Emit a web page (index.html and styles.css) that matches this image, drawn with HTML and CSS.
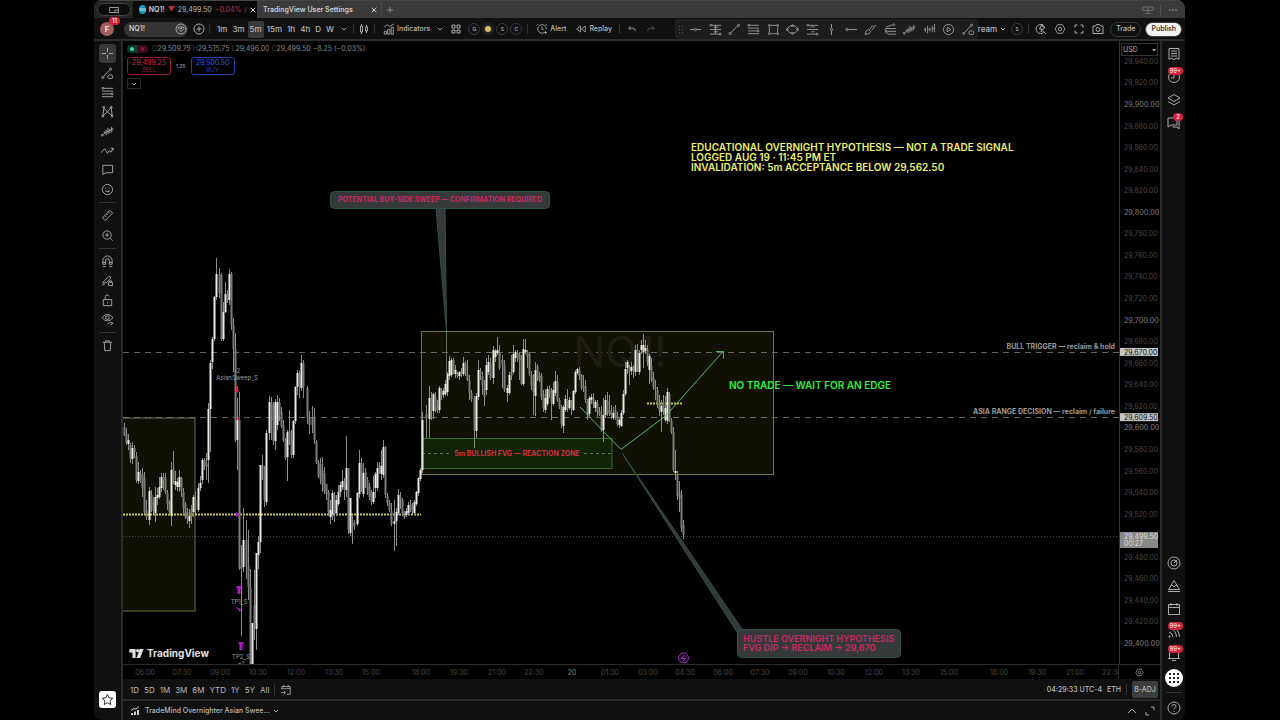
FILE: index.html
```
<!DOCTYPE html>
<html lang="en">

<head>
    <meta charset="UTF-8">
    <meta name="viewport" content="width=device-width, initial-scale=1.0">
    <title>NQ1! 29,499.50</title>
    <link rel="stylesheet" href="styles.css">
</head>

<body>
    <!-- shared icons -->
    <svg class="sprite" aria-hidden="true">
        <symbol id="down" viewBox="0 0 6 6"><path d="M1 2l2 2 2-2" /></symbol>
        <symbol id="close" viewBox="0 0 6 6"><path d="M.7.7l4.6 4.6M5.3.7L.7 5.3" /></symbol>
        <symbol id="trend" viewBox="0 0 14 14"><path d="M3 10.5L10.500 3" /><circle cx="2.200" cy="11.300" r="1.200" /><circle cx="11.300" cy="2.500" r="1.200" /></symbol>
        <symbol id="trendlock" viewBox="0 0 14 14"><path d="M2.500 10.500L9.500 3" /><circle cx="1.800" cy="11.300" r="1.100" /><circle cx="10.300" cy="2.300" r="1.100" /><rect x="7.500" y="8.500" width="5" height="4" rx="1.500" /></symbol>
        <symbol id="fib" viewBox="0 0 14 14"><path d="M3 2.500h10M1 5.500h12M1 8.500h10M1 11.500h12" /><circle cx="2" cy="2.500" r="1" /><circle cx="12" cy="8.500" r="1" /></symbol>
        <symbol id="position" viewBox="0 0 14 14"><path d="M3 2.500h10M1 7h12M1 12h10M7 2.500v9M5 4.500h5M5 9.500h5" /><circle cx="2" cy="2.500" r="1" /><circle cx="12" cy="12" r="1" /></symbol>
        <symbol id="bars" viewBox="0 0 14 14"><path d="M2 10.500l1.500-1.500V7M5.500 5v6M7.500 3v7M9.500 4v5M11.500 2v6M3.500 9l2-1 2-1 2-1 2-1 2-1" /><circle cx="1.300" cy="11" r="1" /></symbol>
        <symbol id="gear" viewBox="0 0 14 14"><path d="M4.200 2h5.600l3 5-3 5H4.200l-3-5z" /><circle cx="7" cy="7" r="2" /></symbol>
        <symbol id="chart" viewBox="0 0 14 14"><path d="M1 5l4-3 3 2 5-3M1.500 13V9.500H4V13zM5.500 13V7.500H8V13zM9.500 13V5H12v8z" /></symbol>
    </svg>

    <div class="app">
        <header class="tabs">
            <div class="tabs-start"><button class="pill" aria-label="Window"><svg viewBox="0 0 14 10"><rect x="2" y="2" width="10" height="6" /><path d="M8 8V5h4" /></svg></button></div>
            <div class="tab active">
                <span class="coin">100</span>
                <b>NQ1!</b>
                <span class="red">▼</span>
                <span>29,499.50</span>
                <span class="red">−0.04%</span>
                <span class="dim">/</span>
                <button class="x" aria-label="Close"><svg><use href="#close" /></svg></button>
            </div>
            <div class="tab">
                <b>TradingView User Settings</b>
                <button class="x" aria-label="Close"><svg><use href="#close" /></svg></button>
            </div>
            <button class="new-tab" aria-label="New tab"><svg viewBox="0 0 8 8"><path d="M4 1v6M1 4h6" /></svg></button>
            <div class="tabs-end">
                <button aria-label="Layout"><svg viewBox="0 0 14 10"><path d="M1 1.500h12v4H1zM7 1.500V9M4 9h6" /></svg></button>
                <button aria-label="More"><svg viewBox="0 0 14 10"><circle cx="3.500" cy="5" r="1" /><circle cx="7" cy="5" r="1" /><circle cx="10.500" cy="5" r="1" /></svg></button>
            </div>
        </header>

        <nav class="toolbar">
            <button class="avatar">F<i>11</i></button>
            <button class="symbol">NQ1!<svg viewBox="0 0 12 12"><circle cx="6" cy="6" r="5" /><path d="M3.500 4h5L9 5.500l-3 3-3-3zM5 5.500h2" /></svg></button>
            <button class="icon" aria-label="Compare"><svg viewBox="0 0 12 12"><circle cx="6" cy="6" r="5" /><path d="M6 3.500v5M3.500 6h5" /></svg></button>
            <hr>
            <div class="frames">
                <button>1m</button><button>3m</button><button class="on">5m</button><button>15m</button><button>1h</button><button>4h</button><button>D</button><button>W</button>
                <button class="more" aria-label="More intervals"><svg><use href="#down" /></svg></button>
            </div>
            <hr>
            <button class="icon" aria-label="Candles"><svg viewBox="0 0 12 12"><path d="M2.500 3h2v6h-2zM3.500 1v2M3.500 9v2M7.500 4h2v4h-2zM8.500 2v2M8.500 8v2" /></svg></button>
            <hr>
            <button class="text"><svg><use href="#chart" /></svg>Indicators</button>
            <button class="more fav" aria-label="Favourite indicators"><svg><use href="#down" /></svg></button>
            <button class="icon grid" aria-label="Templates"><svg viewBox="0 0 12 12"><path d="M2 2h3v3H2zM7 2h3v3H7zM2 7h3v3H2zM7 7h3v3H7z" /></svg></button>
            <div class="circles">
                <button>G</button><button class="gold" aria-label="Gold template"></button><button>S</button><button>C</button>
            </div>
            <hr>
            <button class="text"><svg viewBox="0 0 14 14"><path d="M9 11.500A5 5 0 1 1 12 7M7 4v3.500h2M1 3l2-2M11 1l2 2M11 9v4M9 11h4" /></svg>Alert</button>
            <button class="text replay"><svg viewBox="0 0 14 14"><path d="M6.500 3.500v7L2 7zM12 3.500v7L7.500 7z" /></svg>Replay</button>
            <hr>
            <button class="icon undo" aria-label="Undo"><svg viewBox="0 0 12 12"><path d="M4.500 2.500L2 5l2.500 2.500M2 5h5q3 0 3 3.500" /></svg></button>
            <button class="icon undo dim" aria-label="Redo"><svg viewBox="0 0 12 12"><path d="M7.500 2.500L10 5 7.500 7.500M10 5H5q-3 0-3 3.500" /></svg></button>

            <div class="favorites">
                <span class="grip"></span>
                <button aria-label="Horizontal line"><svg viewBox="0 0 14 14"><path d="M1 7h4.500M8.500 7H13" /><circle cx="7" cy="7" r="1.200" /></svg></button>
                <button aria-label="Long position"><svg><use href="#position" /></svg></button>
                <button aria-label="Trend line"><svg><use href="#trend" /></svg></button>
                <button aria-label="Fib retracement"><svg><use href="#fib" /></svg></button>
                <button aria-label="Rectangle"><svg viewBox="0 0 14 14"><path d="M3.500 2.500h7M3.500 11.500h7M2.500 3.500v7M11.500 3.500v7" /><circle cx="2.500" cy="2.500" r="1" /><circle cx="11.500" cy="2.500" r="1" /><circle cx="2.500" cy="11.500" r="1" /><circle cx="11.500" cy="11.500" r="1" /></svg></button>
                <button aria-label="Ellipse"><svg viewBox="0 0 14 14"><ellipse cx="7" cy="7" rx="5.500" ry="4" /><circle cx="1.300" cy="7" r="1" /><circle cx="12.700" cy="7" r="1" /><circle cx="7" cy="2.800" r="1" /><circle cx="7" cy="11.200" r="1" /></svg></button>
                <button aria-label="Short position"><svg viewBox="0 0 14 14"><path d="M3 2.500h10M1 7h12M1 12h10M5 5l2-2 2 2M6 9.500h3" /><circle cx="2" cy="2.500" r="1" /><circle cx="12" cy="12" r="1" /></svg></button>
                <button aria-label="Vertical line"><svg viewBox="0 0 14 14"><path d="M7 1v4.500M7 8.500V13" /><circle cx="7" cy="7" r="1.200" /></svg></button>
                <button aria-label="Horizontal ray"><svg viewBox="0 0 14 14"><path d="M3 7h10" /><circle cx="2" cy="7" r="1.200" /></svg></button>
                <button aria-label="Brush"><svg viewBox="0 0 14 14"><path d="M1 12q1-5 4-5l2 2q0 3-6 3zM6 7l3-4 2 2-3 3M11 4l2-2" /></svg></button>
                <button aria-label="Fib channel"><svg viewBox="0 0 14 14"><path d="M2 4.500L9 2M13 6H3q-2 0-2 1t2 1M13 9H4q-2 0-2 1M13 12H5q-2 0-4-4" /><circle cx="10.500" cy="1.800" r="1" /></svg></button>
                <button aria-label="Anchored VWAP"><svg><use href="#bars" /></svg></button>
                <button aria-label="Bars pattern"><svg viewBox="0 0 14 14"><path d="M2.500 5v5M5 3v8M7.500 5v4M10 3v7M12.500 1v9M1 7h2M6 7h2M10 6h2" /></svg></button>
                <button aria-label="Replay"><svg viewBox="0 0 14 14"><circle cx="7" cy="7" r="5.500" /><path d="M5.500 4.500v5L9.500 7z" /></svg></button>
                <button aria-label="Line lock"><svg><use href="#trendlock" /></svg></button>
            </div>

            <button class="layout-name">ream</button>
            <button class="more" aria-label="Layouts"><svg><use href="#down" /></svg></button>
            <div class="circles"><button>S</button></div>
            <hr>
            <div class="tool-icons">
                <button class="icon" aria-label="Quick search"><svg viewBox="0 0 12 12"><path d="M8.500 9.500A4.500 4.500 0 1 1 9 3M8 8l3 3M7 1L4.500 6H7L6 9l4-5H7.500z" /></svg></button>
                <button class="icon" aria-label="Settings"><svg><use href="#gear" /></svg></button>
                <button class="icon" aria-label="Fullscreen"><svg viewBox="0 0 12 12"><path d="M2 4.500V2h2.500M7.500 2H10v2.500M10 7.500V10H7.500M4.500 10H2V7.500" /></svg></button>
                <button class="icon" aria-label="Snapshot"><svg viewBox="0 0 12 12"><path d="M1 3h2.500L4.500 1.500h3l1 1.500H11v7.500H1z" /><circle cx="6" cy="6.500" r="2" /></svg></button>
            </div>
            <button class="trade">Trade</button>
            <button class="publish">Publish</button>
        </nav>

        <aside class="left">
            <div class="group g8">
                <button class="on" aria-label="Cross"><svg viewBox="0 0 14 14"><path d="M7 1v4.500M7 8.500V13M1 7h4.500M8.500 7H13" /></svg></button>
                <button aria-label="Lines"><svg><use href="#trendlock" /></svg></button>
                <button aria-label="Fib"><svg><use href="#fib" /></svg></button>
                <button aria-label="Patterns"><svg viewBox="0 0 14 14"><path d="M2 11.500l1-8 4 4 4-5 1 9-5-4z" /><circle cx="3" cy="2.500" r="1" /><circle cx="11" cy="2.500" r="1" /><circle cx="2" cy="12" r="1" /><circle cx="12" cy="12" r="1" /></svg></button>
                <button aria-label="Forecasting"><svg><use href="#bars" /></svg></button>
                <button aria-label="Brushes"><svg viewBox="0 0 14 14"><path d="M0 9.500l4-4.500 3 5 2-3 1.500 2L13 4.500M10.500 4.500H13V7" /></svg></button>
                <button aria-label="Text"><svg viewBox="0 0 14 14"><path d="M2 2.500h10.500v8H5l-3 2z" /></svg></button>
                <button aria-label="Emoji"><svg viewBox="0 0 14 14"><circle cx="7" cy="7" r="5.500" /><path d="M4.500 8.500q2.500 2 5 0M5 5v1M9 5v1" /></svg></button>
            </div>
            <hr>
            <div class="group g2">
                <button aria-label="Measure"><svg viewBox="0 0 14 14"><path d="M1.500 9.500l8-8 3 3-8 8zM4 7l1.500 1.500M6 5l1.500 1.500M8 3l1.500 1.500" /></svg></button>
                <button aria-label="Zoom in"><svg viewBox="0 0 14 14"><circle cx="6.500" cy="6.500" r="4.500" /><path d="M10 10l2.500 2.500M6.500 4.500v4M4.500 6.500h4" /></svg></button>
            </div>
            <hr>
            <div class="group g4">
                <button aria-label="Magnet"><svg viewBox="0 0 14 14"><path d="M2 10V6a5 5 0 0 1 10 0v4H9V6a2 2 0 0 0-4 0v4zM2 12.500h3M9 12.500h3M2 8h3M9 8h3" /></svg></button>
                <button aria-label="Stay in drawing mode"><svg viewBox="0 0 14 14"><path d="M1.500 9.500l7-7q2 0 2 2l-5 5q-2 0-4 0zM1 12l3-1M8 9h4.500v3.500H8zM9 9V7.500h2.500V9" /></svg></button>
                <button aria-label="Lock"><svg viewBox="0 0 14 14"><path d="M2.500 6h9v6.500h-9zM4.500 6V3q0-2 2-2t2 1.500M7 8.500v1.500" /></svg></button>
                <button aria-label="Hide"><svg viewBox="0 0 14 14"><path d="M1 5q6-7 12 0-6 7-12 0zM7 12l3-2 3 1-3 2" /><circle cx="7" cy="5" r="2" /></svg></button>
            </div>
            <hr>
            <div class="group g1">
                <button aria-label="Remove"><svg viewBox="0 0 14 14"><path d="M2 3.500h10M5 3.500V2h4v1.500M3.500 3.500l.5 9h6l.5-9" /></svg></button>
            </div>
            <button class="star" aria-label="Favourites"><svg viewBox="0 0 14 14"><path d="M7 1.500l1.700 3.700 4 .5-3 2.700.8 4L7 10.400l-3.500 2 .8-4-3-2.700 4-.5z" /></svg></button>
        </aside>

        <main class="center">
            <section class="plot">
                <svg class="canvas" id="canvas">
                    <!-- everything below uses window coordinates -->
                    <g transform="translate(-123 -41)">
                        <g class="hlines">
                            <path class="dash" d="M123 352.500H1119M123 417.500H1119" />
                            <path class="last" d="M123 536.500H1119" />
                        </g>
                        <text class="watermark" x="620" y="367">NQ1!</text>
                        <rect class="range" x="100" y="418" width="95" height="193" />
                        <rect class="range" x="421.500" y="331.500" width="352" height="143" />
                        <rect class="gap" x="422" y="438.500" width="190" height="30" />
                        <path class="gap-mid" d="M422 453.500H449M584 453.500H612" />
                        <path class="dots" d="M123 514.500H421M647 403.500H683" />
                        <g id="candles"></g>
                        <g class="marks">
                            <text x="237" y="373">-2</text>
                            <text x="237" y="380">AsianSweep_S</text>
                            <text x="239" y="604">TP1_S</text>
                            <text x="241" y="659">TP2_S</text>
                            <text x="241" y="666">+1</text>
                            <path class="sell" d="M236 386h2v4h2l-3 3-3-3h2zM240 416v5l-3-2.500z" />
                            <path class="take" d="M236 586h6l-1.500 3v5h-3v-5zM238 642h6l-1.500 3v5h-3v-5zM236 512l4 2.500-4 2.500zM236 607l4 5 1-3z" />
                        </g>
                        <path class="callout" d="M436 208L446.500 331 445 208z" />
                        <path class="callout-line" d="M446.500 331v45" />
                        <path class="callout" d="M622 453L737 632 742 629z" />
                        <rect class="callout" x="330.500" y="191.500" width="219" height="17" rx="4" />
                        <rect class="callout" x="737.500" y="629.500" width="163" height="28" rx="4" />
                        <path class="plan" d="M580 407L621 449.500 666 415.500 723 351.500M716 351.500h7.500v7" />
                        <text class="pink small" x="440" y="202">POTENTIAL BUY-SIDE SWEEP — CONFIRMATION REQUIRED</text>
                        <text class="pink" x="743" y="642">HUSTLE OVERNIGHT HYPOTHESIS</text>
                        <text class="pink" x="743" y="651">FVG DIP → RECLAIM → 29,670</text>
                        <text class="zone" x="517" y="456">5m BULLISH FVG — REACTION ZONE</text>
                        <text class="note" x="691" y="151">EDUCATIONAL OVERNIGHT HYPOTHESIS — NOT A TRADE SIGNAL</text>
                        <text class="note" x="691" y="161">LOGGED AUG 19 · 11:45 PM ET</text>
                        <text class="note" x="691" y="171">INVALIDATION: 5m ACCEPTANCE BELOW 29,562.50</text>
                        <text class="wait" x="729" y="389">NO TRADE — WAIT FOR AN EDGE</text>
                        <text class="level" x="1115" y="349">BULL TRIGGER — reclaim &amp; hold</text>
                        <text class="level" x="1115" y="414">ASIA RANGE DECISION — reclaim / failure</text>
                        <g class="event"><circle cx="683.500" cy="658" r="5" /><path d="M684.500 655l-3 3.500h4l-3 3" /></g>
                    </g>
                </svg>
                <div class="legend">
                    <div class="ohlc">
                        <span class="status"><i></i><em>≈</em></span>
                        <span><u>O</u>29,509.75</span><span><u>H</u>29,515.75</span><span><u>L</u>29,496.00</span><span><u>C</u>29,499.50</span><span>−8.25 (−0.03%)</span>
                    </div>
                    <div class="quotes">
                        <button class="ask">29,499.25<small>SELL</small></button>
                        <span>1.25</span>
                        <button class="bid">29,500.50<small>BUY</small></button>
                    </div>
                    <button class="fold" aria-label="Collapse"><svg><use href="#down" /></svg></button>
                </div>
                <a class="brand" href="#"><svg viewBox="0 0 16 10"><path d="M0 0h7v10H3.500V4H0zM11.500 0H16l-4 10H8z" /><circle cx="9.300" cy="1.800" r="1.800" /></svg>TradingView</a>
            </section>

            <section class="prices">
                <label class="currency"><select aria-label="Currency">
                        <option>USD</option>
                    </select><svg viewBox="0 0 6 6"><path d="M1 2h4L3 4.500z" /></svg></label>
                <svg class="canvas" id="prices"></svg>
            </section>

            <svg class="times" id="times"></svg>
            <button class="axis-gear" aria-label="Axis settings"><svg><use href="#gear" /></svg></button>

            <div class="ranges">
                <button>1D</button><button>5D</button><button>1M</button><button>3M</button><button>6M</button><button>YTD</button><button>1Y</button><button>5Y</button><button>All</button>
                <hr>
                <button aria-label="Go to date"><svg viewBox="0 0 14 14"><path d="M2 6V3h10v9H8M4.500 1v3M9.500 1v3M2 5.500h10M1 10h5M4.500 8L6.500 10l-2 2" /></svg></button>
                <div class="ranges-end">
                    <button>04:29:33 UTC-4</button><button>ETH</button>
                    <hr><button class="on">B-ADJ</button>
                </div>
            </div>
            <footer class="footer">
                <svg class="solid" viewBox="0 0 10 10"><path d="M1 7h2v2H1zM4 5.500h2V9H4zM7 4h2v5H7z" /><path class="stroke" d="M1 4.500L4 2.500 6 3l3-2.500" /></svg>
                <span>TradeMind Overnighter Asian Swee...</span>
                <button class="more" aria-label="Strategy menu"><svg><use href="#down" /></svg></button>
                <div class="footer-end">
                    <button aria-label="Open panel"><svg viewBox="0 0 10 10"><path d="M1 7l4-4 4 4" /></svg></button>
                    <button aria-label="Maximise panel"><svg viewBox="0 0 10 10"><path d="M6 1h3v3M4 9H1V6" /></svg></button>
                </div>
            </footer>
        </main>

        <aside class="right">
            <button aria-label="Watchlist"><svg viewBox="0 0 14 14"><path d="M2 1.500h10v11l-2-1.500-3 1.500L4 11l-2 1.500zM4 4h6M4 6.500h6M4 9h6" /></svg></button>
            <button aria-label="Alerts"><svg viewBox="0 0 14 14"><circle cx="7" cy="7" r="5.500" /><path d="M7 4v4H4" /></svg><i>99+</i></button>
            <button aria-label="Object tree"><svg viewBox="0 0 14 14"><path d="M7 1.500l6 3.500-6 3.500L1 5zM1 8.500L7 12l6-3.500" /></svg></button>
            <button aria-label="Chats"><svg viewBox="0 0 14 14"><path d="M1 2h9v7H4l-3 2zM12 4.500v8.500l-2-2H5.500" /></svg><i class="one">2</i></button>
            <div class="spacer"></div>
            <button aria-label="Screener"><svg viewBox="0 0 14 14"><circle cx="7" cy="7" r="6" /><circle cx="7" cy="7" r="3" /><path d="M7 7l3-3" /></svg></button>
            <button aria-label="Pine"><svg viewBox="0 0 14 14"><path d="M7 1.500L3 8l2-2 2 2 2-2 2 2zM3 8l-1.500 2.500h11L11 8M1 12.500h12" /></svg></button>
            <button aria-label="Calendar"><svg viewBox="0 0 14 14"><path d="M1.500 2.500h11v10h-11zM1.500 5.500h11M4 1v3M10 1v3" /></svg></button>
            <button aria-label="News"><svg viewBox="0 0 14 14"><path d="M2 7q4 1 4 5M4 4q5 1 5.500 8M7 2q5 3 5.500 10" /><circle cx="2.500" cy="11.500" r=".7" /></svg><i>99+</i></button>
            <button aria-label="Notifications"><svg viewBox="0 0 14 14"><path d="M2.500 10.500V5q0-3 4.500-3t4.500 3v5.500h1.500H1zM5 12.500h4" /></svg><i>99+</i></button>
            <button class="apps" aria-label="Products"><svg viewBox="0 0 18 18"><circle cx="9" cy="9" r="9" /><path d="M4 5h10M4 9h10M4 13h10" /></svg></button>
            <hr>
            <button aria-label="Help"><svg viewBox="0 0 14 14"><circle cx="7" cy="7" r="6" /><path d="M5 5.500q0-2 2-2t2 1.700q0 1-2 2.300v1M7 10v1" /></svg></button>
        </aside>
    </div>
    <script src="chart.js"></script>
</body>

</html>
```
FILE: styles.css
```
* {
    box-sizing: border-box;
}

body {
    margin: 0;
    background: #000;
    color: #b8b8b8;
    font: 8px/10px Inter, "Liberation Sans", sans-serif;
}

button {
    display: flex;
    align-items: center;
    justify-content: center;
    margin: 0;
    padding: 0;
    border: 0;
    background: none;
    color: inherit;
    font: inherit;
    white-space: nowrap;
}

svg {
    display: block;
    flex: none;
    width: 12px;
    height: 12px;
    fill: none;
    stroke: #aaa;
    stroke-width: 1;
}

hr {
    flex: none;
    margin: 0;
    border: 0;
    background: #333;
}

.sprite {
    position: absolute;
    width: 0;
    height: 0;
}

.app {
    display: grid;
    grid-template-columns: 29px 1fr 25px;
    grid-template-rows: 18px 23px 1fr;
    height: 100vh;
    margin: 0 95px 0 94px;
    border-radius: 8px;
    background: #101010;
    overflow: hidden;
}

.red {
    color: #c22f45;
}

/* tabs */
.tabs {
    grid-column: 1 / -1;
    display: flex;
    align-items: center;
    border-top: 1px solid #444;
    background: #3a3a3a;
}

.tabs-start {
    align-self: stretch;
    display: flex;
    align-items: center;
    width: 39px;
    padding-left: 3px;
    background: #242424;
}

.pill {
    width: 34px;
    height: 13px;
    border: 1px solid #444;
    border-radius: 8px;
    background: #0c0c0c;
}

.tab {
    align-self: stretch;
    display: flex;
    align-items: center;
    gap: 3px;
    width: 125px;
    padding: 0 4px 0 6px;
    border-right: 1px solid #4a4a4a;
}

.tab.active {
    width: 124px;
    border: 0;
    background: #090909;
}

.tab b {
    font-size: 7px;
    font-weight: 600;
    color: #ccc;
}

.tab span {
    font-size: 7px;
}

.tab .coin {
    width: 9px;
    height: 9px;
    border-radius: 50%;
    background: #159bb5;
    color: #fff;
    font-size: 4px;
    line-height: 9px;
    text-align: center;
}

.tab .dim {
    color: #666;
}

.x {
    margin-left: auto;
}

.x svg {
    width: 6px;
    height: 6px;
    stroke: #ccc;
}

.tab.active .x {
    margin-right: 2px;
}

.new-tab {
    width: 16px;
}

.new-tab svg {
    width: 8px;
    height: 8px;
    stroke: #888;
}

.tabs-end {
    display: flex;
    margin-left: auto;
}

.tabs-end button {
    width: 25px;
}

.tabs-end button + button {
    border-left: 1px solid #555;
}

.tabs-end svg {
    height: 10px;
    stroke: #777;
}

/* toolbar */
.toolbar {
    grid-column: 1 / -1;
    display: flex;
    align-items: center;
    padding: 1px 3px 0 6px;
    border-bottom: 2px solid #2c2c2c;
    font-weight: 500;
}

.toolbar hr {
    width: 1px;
    height: 10px;
    margin: 0 3px;
}

.avatar {
    position: relative;
    width: 14px;
    height: 14px;
    margin-right: 10px;
    border-radius: 50%;
    background: #a35d60;
    color: #fff;
}

.avatar i,
.right i {
    position: absolute;
    top: -5px;
    right: -6px;
    padding: 0 3px;
    border-radius: 5px;
    background: #d0213f;
    color: #fff;
    font-size: 6px;
    font-style: normal;
    line-height: 8px;
}

.symbol {
    justify-content: space-between;
    width: 64px;
    height: 15px;
    padding: 0 1px 0 5px;
    border-radius: 8px;
    background: #343434;
    color: #ccc;
    font-size: 7px;
    font-weight: 600;
}

.icon {
    width: 14px;
    height: 16px;
}

.symbol + .icon {
    margin-left: 4px;
}

.frames {
    display: flex;
    gap: 1px;
    margin-left: 2px;
}

.frames button {
    height: 17px;
    padding: 0 2px;
    border-radius: 2px;
}

.frames .on {
    background: #393939;
}

.more {
    width: 12px;
}

.more svg {
    width: 6px;
    height: 6px;
}

.frames .more {
    margin-left: 1px;
}

.fav {
    margin-left: 4px;
}

.text {
    gap: 2px;
    margin-left: 5px;
    font-size: 7px;
}

.grid {
    margin: 0 3px;
}

.circles {
    display: flex;
    gap: 2px;
    padding: 0 2px;
}

.circles button {
    width: 12px;
    height: 12px;
    border: 1px solid #3a3a3a;
    border-radius: 50%;
    font-size: 5px;
}

.circles .gold {
    border: 3px solid #222;
    background: #d8bd62;
}

.replay {
    margin: 0 4px 0 9px;
}

.undo {
    width: 19px;
}

.undo svg {
    width: 10px;
}

.undo.dim {
    opacity: .5;
}

.favorites {
    display: flex;
    align-items: center;
    width: 303px;
    height: 20px;
    margin-left: auto;
    border-radius: 3px;
    background: #1d1d1d;
}

.favorites button {
    flex: 1;
}

.favorites svg {
    width: 13px;
    height: 13px;
    stroke: #999;
}

.grip {
    width: 11px;
    height: 8px;
    background: radial-gradient(circle, #555 1px, transparent 1px) 3px 0 / 3px 3px;
    background-clip: content-box;
    padding: 0 3px;
}

.tool-icons {
    display: flex;
    gap: 5px;
    padding: 0 5px 0 2px;
}

.trade,
.publish {
    height: 15px;
    padding: 0 5px;
    border: 1px solid #3a3a3a;
    border-radius: 8px;
    font-size: 7px;
}

.publish {
    margin-left: 4px;
    background: #f2f2f2;
    color: #222;
}

/* side bars */
.left,
.right {
    display: flex;
    flex-direction: column;
    align-items: center;
}

.left {
    padding: 3px 0 12px;
    border-right: 2px solid #292929;
}

.left svg {
    width: 13px;
    height: 13px;
}

.group {
    display: flex;
    flex-direction: column;
}

.group button {
    flex: 1;
    width: 17px;
    border-radius: 3px;
}

.group .on {
    background: #383838;
}

.g8 {
    height: 155px;
}

.g4 {
    height: 77px;
}

.g2 {
    height: 39px;
}

.g1 {
    height: 19px;
}

.left hr {
    width: 17px;
    height: 1px;
    margin: 3px 0;
}

.star {
    width: 17px;
    height: 17px;
    margin-top: auto;
    border-radius: 3px;
    background: #fff;
}

.star svg {
    stroke: #222;
}

.right {
    padding: 1px 0;
    border-left: 2px solid #292929;
}

.right button {
    position: relative;
    width: 23px;
    height: 23px;
}

.right svg {
    width: 14px;
    height: 14px;
}

.right i {
    top: 2px;
    right: 2px;
}

.right i:not(.one) {
    padding: 0 2px;
}

.spacer {
    flex: 1;
}

.right hr {
    width: 16px;
    height: 1px;
    margin: 3px 0;
}

.right .apps svg {
    width: 18px;
    height: 18px;
    fill: #fff;
    stroke: none;
}

.right .apps path {
    stroke: #222;
    stroke-width: 2;
    stroke-dasharray: 2;
}

/* chart */
.center {
    display: grid;
    grid-template-columns: 1fr 41px;
    grid-template-rows: 1fr 15px 20px 21px;
    min-width: 0;
    min-height: 0;
    background: #000;
}

.plot,
.prices {
    position: relative;
    min-height: 0;
    overflow: hidden;
}

.prices {
    border-left: 1px solid #333;
}

.canvas {
    position: absolute;
    inset: 0;
    width: 100%;
    height: 100%;
    stroke: none;
}

.dash {
    stroke: #666;
    stroke-dasharray: 6 5;
}

.last {
    stroke: #444;
    stroke-dasharray: 1 2;
}

.watermark {
    fill: #101010;
    font-size: 42px;
    text-anchor: middle;
}

.range {
    fill: rgba(110, 110, 30, .14);
    stroke: #6f7540;
}

.gap {
    fill: rgba(24, 90, 20, .28);
    stroke: #3d6b2c;
}

.gap-mid {
    stroke: #63784a;
    stroke-dasharray: 3 3;
}

.dots {
    stroke: #c4c84e;
    stroke-width: 2;
    stroke-dasharray: 2 1;
}

.up {
    fill: #eaeae4;
}

.down {
    fill: #7c7c7c;
}

.wick {
    stroke: #8c8c8c;
}

.marks text {
    fill: #999;
    font-size: 6px;
    text-anchor: middle;
}

.sell {
    fill: #d81f4b;
}

.take {
    fill: #b012c8;
}

.callout {
    fill: #35393a;
    stroke: #2b534d;
}

.callout-line {
    stroke: #5f6b5a;
}

.plan {
    stroke: #5cb556;
    stroke-width: 1;
}

.pink {
    fill: #cb2860;
    font-size: 9px;
    font-weight: 600;
}

.pink.small {
    font-size: 7px;
    font-weight: 700;
    text-anchor: middle;
}

.zone {
    fill: #d63042;
    font-size: 7px;
    font-weight: 700;
    text-anchor: middle;
}

.note {
    fill: #eef06a;
    font-size: 10px;
    font-weight: 600;
}

.wait {
    fill: #2cf23c;
    font-size: 10px;
    font-weight: 600;
}

.level {
    fill: #999;
    font-size: 7px;
    font-weight: 700;
    text-anchor: end;
}

.event {
    fill: #22082e;
    stroke: #8c3ca8;
}

.legend {
    position: absolute;
    top: 3px;
    left: 4px;
    color: #888;
    font-size: 7px;
}

.ohlc,
.quotes {
    display: flex;
    align-items: center;
    gap: 2px;
}

.ohlc u {
    color: #444;
    text-decoration: none;
}

.status {
    display: flex;
    align-items: center;
    width: 21px;
    height: 8px;
    margin-right: 2px;
    border-radius: 4px;
    background: linear-gradient(90deg, #073a2a 50%, #3d0a1c 50%);
}

.status i {
    width: 4px;
    height: 4px;
    margin: 0 6px 0 3px;
    border-radius: 50%;
    background: #3bd99a;
}

.status em {
    color: #d02a5c;
    font-style: normal;
}

.quotes {
    gap: 5px;
    margin-top: 3px;
}

.quotes span {
    color: #aaa;
    font-size: 5px;
}

.quotes button {
    flex-direction: column;
    width: 44px;
    height: 18px;
    border: 1px solid #8c1b36;
    border-radius: 3px;
    color: #d02549;
    line-height: 7px;
}

.quotes small {
    font-size: 6px;
    opacity: .7;
}

.quotes .bid {
    border-color: #1d46a0;
    color: #2a5fe0;
}

.fold {
    width: 14px;
    height: 11px;
    margin-top: 3px;
    border: 1px solid #2a2a2a;
}

.fold svg {
    width: 6px;
    height: 6px;
}

.brand {
    position: absolute;
    left: 6px;
    bottom: 4px;
    display: flex;
    align-items: center;
    gap: 3px;
    color: #e0e0e0;
    font-size: 10px;
    font-weight: 700;
    line-height: 13px;
    text-decoration: none;
}

.brand svg {
    width: 15px;
    height: 9px;
    fill: #e0e0e0;
    stroke: none;
}

.currency {
    position: absolute;
    z-index: 1;
    top: 2px;
    left: 1px;
    display: flex;
    align-items: center;
    width: 37px;
    height: 13px;
    border: 1px solid #333;
    background: #000;
}

.currency select {
    flex: 1;
    min-width: 0;
    padding: 0 0 0 1px;
    border: 0;
    appearance: none;
    background: none;
    color: #aaa;
    font: 7px/10px Inter, "Liberation Sans", sans-serif;
}

.currency svg {
    width: 6px;
    height: 6px;
    fill: #aaa;
    stroke: none;
}

.times {
    width: 100%;
    height: 15px;
    border-top: 1px solid #2a2a2a;
    border-right: 1px solid #2a2a2a;
    stroke: none;
}

.axis-gear {
    border-top: 1px solid #2a2a2a;
}

.axis-gear svg {
    width: 9px;
    height: 9px;
}

.axis {
    fill: #484848;
    font-size: 7px;
}

.axis.major {
    fill: #606060;
    font-weight: 600;
}

.times .axis {
    text-anchor: middle;
}

.tag {
    fill: #c4c4c4;
}

.tag.live {
    fill: #888;
}

.tag-text {
    fill: #111;
    font-size: 7px;
}

.tag-text.live {
    fill: #ddd;
}

.ranges,
.footer {
    grid-column: 1 / -1;
    display: flex;
    align-items: center;
    background: #101010;
}

.ranges {
    gap: 5px;
    padding: 1px 2px 0 7px;
}

.ranges hr {
    width: 1px;
    height: 11px;
}

.ranges-end,
.footer-end {
    display: flex;
    align-items: center;
    gap: 5px;
    margin-left: auto;
}

.ranges-end {
    font-size: 7px;
    font-weight: 500;
}

.ranges .on {
    width: 26px;
    height: 17px;
    border-radius: 2px;
    background: #3d3d3d;
}

.footer {
    padding: 0 5px 0 7px;
    border-top: 2px solid #292929;
}

.footer span {
    margin: 0 0 0 5px;
    font-size: 7px;
    font-weight: 500;
}

.footer svg {
    width: 10px;
    height: 10px;
}

.footer .more svg {
    width: 6px;
    height: 6px;
}

.footer .solid {
    fill: #ccc;
    stroke: none;
}

.solid .stroke {
    fill: none;
    stroke: #ccc;
}

.footer-end {
    gap: 8px;
}
```
FILE: chart.js
```
// x high top bottom low direction, one candle per entry
var data = `
124 423 427 435 436 d,126 428 434 443 445 d,128 434 440 444 450 u,130 443 445 459 463 d,132 442 448 459 464 u,134 445 448 452 458 d,
136 452 456 480 483 d,138 462 472 481 484 u,140 470 475 479 483 d,142 468 474 488 497 d,144 472 478 512 514 d,146 500 510 517 520 d,
149 487 491 520 525 u,151 490 495 506 512 d,153 497 503 511 514 d,155 487 497 513 522 u,157 488 495 498 505 u,159 477 487 497 499 u,
161 473 477 488 492 u,163 473 477 480 490 d,165 473 478 492 494 d,167 490 493 504 510 d,169 500 502 512 516 d,171 462 470 516 526 u,
173 451 469 480 484 d,175 471 481 485 490 u,177 478 482 487 491 u,179 470 477 487 492 u,181 477 478 491 497 d,183 488 492 508 513 d,
185 502 504 517 519 d,187 508 512 519 524 d,189 509 516 521 528 u,191 505 509 517 524 d,193 495 497 512 517 u,195 492 500 509 514 d,
198 483 488 510 512 u,200 476 483 488 491 u,202 458 460 480 484 u,204 458 460 466 470 d,206 453 463 467 480 d,208 403 409 460 483 u,
210 360 363 409 452 u,212 337 339 362 369 u,214 296 297 339 341 u,216 258 274 297 300 u,219 268 274 293 298 d,221 273 275 339 341 d,
223 302 312 339 341 u,225 282 294 312 313 u,227 290 294 300 303 d,229 269 274 300 305 u,231 272 274 325 330 d,233 318 325 349 372 d,
235 333 349 440 442 d,237 398 420 440 470 u,239 392 420 568 570 d,241 545 566 569 636 d,243 508 540 567 572 u,246 520 540 566 579 d,
248 530 566 587 600 d,250 569 587 668 668 d,252 623 623 668 668 u,254 570 605 623 640 d,256 553 553 629 650 u,258 536 542 555 569 u,
260 465 465 542 553 u,262 455 465 468 480 d,264 466 467 500 507 d,266 430 433 502 505 u,269 396 402 433 440 u,271 397 403 420 440 d,
273 402 405 441 445 d,275 399 402 441 450 u,277 395 402 425 430 u,279 398 403 414 421 d,281 407 412 426 428 d,283 420 425 440 442 d,
285 438 440 458 460 d,287 430 432 457 481 u,289 410 431 440 445 d,291 430 440 455 458 d,293 420 421 455 458 u,295 386 387 421 424 u,
297 370 373 387 395 u,299 371 374 387 398 d,301 355 363 388 391 u,303 360 363 387 398 d,307 386 388 417 424 d,309 411 417 425 434 d,
312 406 417 425 433 d,314 408 418 440 444 d,316 440 441 462 464 d,318 460 462 476 478 d,320 458 464 479 484 d,322 457 470 485 492 d,
324 467 473 491 494 d,326 484 484 494 500 d,328 490 492 512 516 d,330 500 510 517 524 u,332 490 493 514 520 u,334 492 495 514 522 d,
336 495 500 513 516 u,338 485 492 504 506 u,340 482 485 492 497 u,342 470 481 487 490 u,344 478 483 490 500 d,346 436 468 490 497 u,
348 468 468 530 534 d,350 498 498 533 536 u,352 515 522 527 544 d,354 520 523 525 530 d,357 492 493 524 526 u,359 450 463 494 498 u,
361 458 464 487 492 d,363 463 473 494 497 u,365 468 472 480 488 d,367 477 480 490 495 d,369 483 486 497 500 d,371 490 492 502 505 d,
373 476 492 502 504 u,375 472 474 488 498 u,377 462 468 488 491 u,379 462 465 472 474 d,381 450 466 474 480 u,383 440 447 475 478 u,
385 446 447 495 498 d,387 493 496 503 506 d,389 500 503 510 512 d,391 503 511 524 526 d,394 500 521 524 551 u,396 508 512 521 546 u,
398 489 495 513 515 u,400 492 497 500 509 d,402 498 500 513 516 d,404 511 512 517 519 d,406 508 511 515 517 u,408 502 505 513 515 u,
410 500 504 510 512 d,412 503 506 512 514 d,414 500 502 513 515 u,416 491 492 504 506 u,418 477 478 493 496 u,420 468 470 479 481 u,
422 412 420 470 473 u,426 405 414 418 438 d,429 386 398 419 438 u,431 392 399 411 420 d,433 393 394 411 419 u,435 392 398 409 412 d,
437 400 406 411 413 d,439 386 388 410 413 u,441 388 390 395 400 d,443 388 391 395 398 u,445 380 384 394 396 u,447 372 374 392 396 u,
449 356 361 376 380 u,451 358 360 375 377 u,453 358 360 373 374 d,455 365 370 374 378 u,457 372 374 376 378 d,459 371 372 376 380 u,
461 368 372 374 377 d,463 357 363 374 376 u,465 361 363 374 376 d,467 360 374 380 381 d,469 375 380 393 400 d,471 390 393 399 402 d,
474 396 398 430 448 d,476 393 396 431 438 u,478 360 370 397 400 u,480 368 371 374 380 d,482 372 376 385 395 d,484 380 385 397 406 d,
486 358 365 390 395 u,488 355 362 372 375 u,490 358 363 378 380 d,493 346 350 378 384 u,495 349 351 357 362 u,497 337 350 353 355 u,
499 345 353 368 370 d,502 355 360 365 388 d,504 360 365 390 392 d,507 385 388 393 402 u,509 372 375 393 395 u,511 355 372 376 380 d,
513 345 354 372 374 u,515 350 352 358 362 u,517 350 353 358 362 d,519 352 354 360 380 d,521 355 358 384 385 d,523 339 349 384 386 u,
525 339 350 352 354 u,527 350 352 356 368 d,529 352 354 374 376 d,531 371 375 386 390 d,533 374 382 392 415 d,535 362 370 396 416 u,
537 364 366 378 381 d,539 372 375 380 382 d,541 373 376 397 400 d,543 390 394 408 412 d,545 389 398 410 413 u,547 386 389 404 406 u,
549 385 389 393 398 d,551 388 391 402 420 d,553 382 390 404 406 u,555 371 381 393 396 u,557 375 382 400 402 d,559 398 400 407 409 d,
561 405 407 424 428 d,563 405 407 426 433 u,565 395 399 410 412 u,567 389 400 409 412 d,569 397 400 408 410 u,571 400 402 408 415 d,
573 390 391 410 411 u,575 370 372 392 394 u,577 368 369 373 375 u,579 367 370 376 380 d,581 374 375 388 390 d,583 375 386 388 392 d,
585 380 386 400 403 d,587 399 401 415 420 d,589 396 398 414 416 u,591 394 397 400 404 u,593 393 398 404 408 d,595 400 402 408 412 u,
597 400 404 412 417 d,599 407 411 414 416 d,601 406 414 430 432 d,603 398 415 430 442 u,605 395 400 415 418 u,607 392 401 412 416 d,
609 395 410 414 416 d,611 405 412 415 419 d,613 407 413 418 420 u,615 405 410 418 420 d,617 412 416 424 426 d,619 418 420 425 428 u,
621 410 413 426 427 u,623 390 394 413 415 u,625 362 369 394 396 u,627 360 362 368 374 u,629 365 367 372 385 d,631 362 367 371 375 u,
633 365 367 371 378 d,635 345 350 372 376 u,637 344 350 365 372 d,639 350 353 372 375 u,641 340 345 350 354 u,643 334 345 352 368 u,
645 340 348 351 354 u,647 345 350 362 366 d,649 354 356 370 384 u,651 358 366 380 382 d,653 372 378 387 390 d,655 380 387 389 400 d,
657 387 390 405 408 d,659 395 403 410 416 d,661 400 406 412 432 u,663 395 402 412 415 d,665 396 408 420 422 u,667 388 392 421 424 u,
669 392 394 420 422 d,671 418 421 432 434 d,673 427 432 470 472 d,675 450 471 473 480 u,677 471 475 496 500 d,679 481 492 498 512 d,
681 490 495 528 532 d,683 520 525 535 539 d`;

var ns = 'http://www.w3.org/2000/svg';

function add(parent, tag, attrs, text) {
    var el = document.createElementNS(ns, tag);
    for (var key in attrs) {
        el.setAttribute(key, attrs[key]);
    }
    if (text) {
        el.textContent = text;
    }
    parent.appendChild(el);
}

// candles
var candles = document.getElementById('candles');
data.split(',').forEach(function (row) {
    var c = row.trim().split(' ');
    var x = Number(c[0]);
    add(candles, 'path', { class: 'wick', d: 'M' + (x + 0.5) + ' ' + c[1] + 'V' + c[4] });
    add(candles, 'rect', { class: c[5] == 'u' ? 'up' : 'down', x: x - 0.5, y: c[2], width: 2, height: c[3] - c[2] });
});

// price axis
var prices = document.getElementById('prices');

function priceY(price) {
    return 63 + (29900 - price) * 1.078;
}

function format(price) {
    return price.toLocaleString('en-US', { minimumFractionDigits: 2 });
}

for (var p = 29940; p >= 29400; p -= 20) {
    if (p != 29500) {
        add(prices, 'text', { class: p % 100 ? 'axis' : 'axis major', x: 4, y: priceY(p) + 3 }, format(p));
    }
}

[29670, 29609.5].forEach(function (price) {
    add(prices, 'rect', { class: 'tag', x: 0, y: priceY(price) - 4, width: 38, height: 8 });
    add(prices, 'text', { class: 'tag-text', x: 4, y: priceY(price) + 3 }, format(price));
});
add(prices, 'rect', { class: 'tag live', x: 0, y: 491, width: 38, height: 16 });
add(prices, 'text', { class: 'tag-text live', x: 4, y: 498 }, '29,499.50');
add(prices, 'text', { class: 'tag-text live', x: 4, y: 505 }, '00:27');

// time axis
var times = document.getElementById('times');
[[22, '06:00'], [59, '07:30'], [97, '09:00'], [135, '10:30'], [173, '12:00'], [211, '13:30'], [248, '15:00'], [298, '18:00'],
[336, '19:30'], [374, '21:00'], [411, '22:30'], [449, '20'], [487, '01:30'], [525, '03:00'], [562, '04:30'], [600, '06:00'],
[637, '07:30'], [675, '09:00'], [713, '10:30'], [751, '12:00'], [788, '13:30'], [826, '15:00'], [876, '18:00'], [914, '19:30'],
[952, '21:00'], [989, '22:30']].forEach(function (t) {
    add(times, 'text', { class: t[1] == '20' ? 'axis major' : 'axis', x: t[0], y: 10 }, t[1]);
});
```
